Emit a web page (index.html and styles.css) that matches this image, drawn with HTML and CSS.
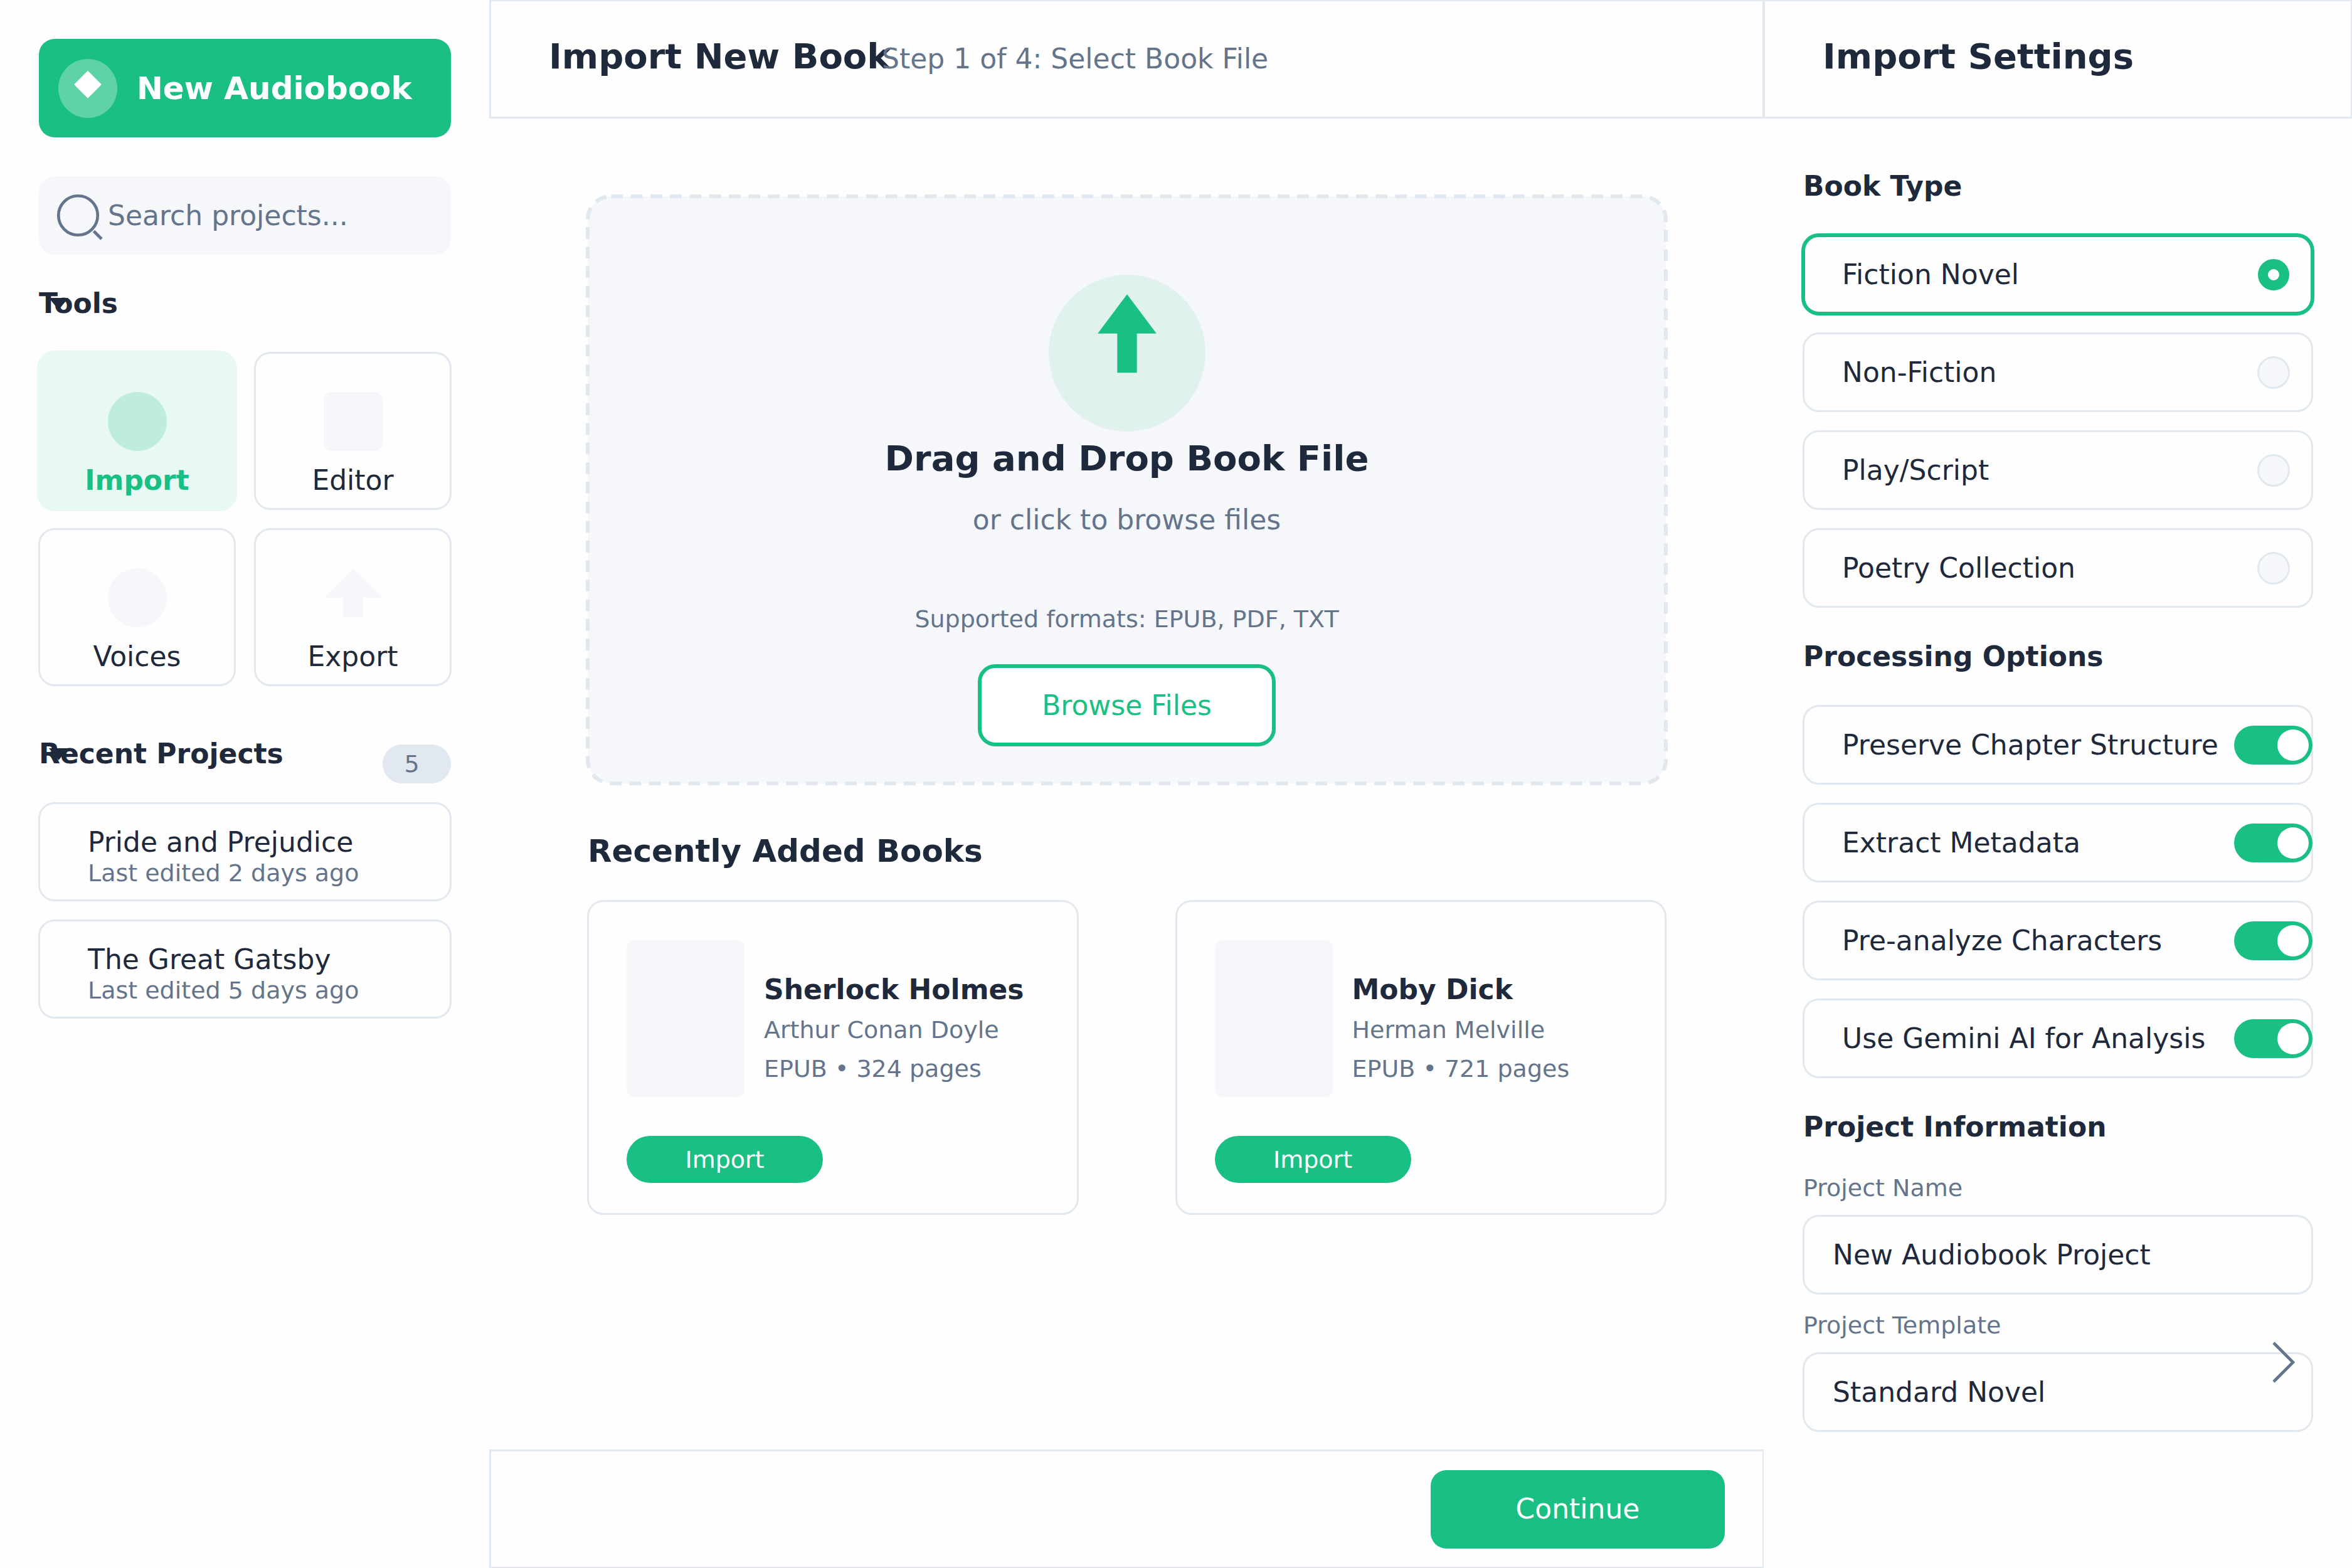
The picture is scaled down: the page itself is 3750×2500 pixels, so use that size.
FILE: index.html
```html
<!DOCTYPE html>
<html lang="en">
<head>
<meta charset="utf-8">
<meta name="viewport" content="width=device-width, initial-scale=1">
<title>Import New Book</title>
<link rel="stylesheet" href="styles.css">
</head>
<body>
<div class="app">
  <aside class="sidebar">
    <button class="new-button" type="button">
      <svg class="new-icon" viewBox="0 0 30 30" aria-hidden="true">
        <circle cx="15" cy="15" r="15" fill="#fff" fill-opacity="0.3"/>
        <path d="M15 6L22 13L15 20L8 13Z" fill="#fff"/>
      </svg>
      <span>New Audiobook</span>
    </button>

    <div class="search">
      <input class="search-input" type="search" placeholder="Search projects..." aria-label="Search projects">
      <svg class="search-icon" viewBox="0 0 35 40" aria-hidden="true">
        <circle cx="20" cy="20" r="10"/>
        <path d="M28 28L32 32"/>
      </svg>
    </div>

    <div class="section-head tools-head">
      <h2 class="heading collapsible">Tools
        <svg class="caret" viewBox="0 0 31 19" aria-hidden="true"><path d="M0 0H31L15.5 19Z"/></svg>
      </h2>
    </div>
    <nav class="tools" aria-label="Tools">
      <button class="tool outlined active" type="button">
        <svg class="tool-icon" viewBox="0 0 30 30" aria-hidden="true"><circle cx="15" cy="15" r="15"/></svg>
        <span>Import</span>
      </button>
      <button class="tool outlined" type="button">
        <svg class="tool-icon" viewBox="0 0 30 30" aria-hidden="true"><rect width="30" height="30" rx="4"/></svg>
        <span>Editor</span>
      </button>
      <button class="tool outlined" type="button">
        <svg class="tool-icon" viewBox="0 0 30 30" aria-hidden="true"><circle cx="15" cy="15" r="15"/></svg>
        <span>Voices</span>
      </button>
      <button class="tool outlined" type="button">
        <svg class="tool-icon" viewBox="0 0 30 30" aria-hidden="true"><path d="M15 0L30 15H20V25H10V15H0Z"/></svg>
        <span>Export</span>
      </button>
    </nav>

    <div class="section-head recent-head">
      <h2 class="heading collapsible">Recent Projects
        <svg class="caret" viewBox="0 0 31 19" aria-hidden="true"><path d="M0 0H31L15.5 19Z"/></svg>
      </h2>
      <span class="badge">5</span>
    </div>
    <nav class="projects" aria-label="Recent projects">
      <a class="project outlined" href="#pride-and-prejudice">
        <span class="project-title">Pride and Prejudice</span>
        <span class="project-meta">Last edited 2 days ago</span>
      </a>
      <a class="project outlined" href="#the-great-gatsby">
        <span class="project-title">The Great Gatsby</span>
        <span class="project-meta">Last edited 5 days ago</span>
      </a>
    </nav>
  </aside>

  <main class="main">
    <header class="bar outlined">
      <h1 class="bar-title">Import New Book</h1>
      <p class="bar-step">Step 1 of 4: Select Book File</p>
    </header>

    <div class="content">
      <section class="dropzone">
        <svg class="dropzone-border" aria-hidden="true"><rect width="100%" height="100%" rx="37.5"/></svg>
        <svg class="upload-icon" viewBox="0 0 80 80" aria-hidden="true">
          <circle cx="40" cy="40" r="40" fill="#dff2ed"/>
          <path d="M40 10L55 30H45V50H35V30H25Z"/>
        </svg>
        <h2 class="drop-title">Drag and Drop Book File</h2>
        <p class="drop-hint">or click to browse files</p>
        <p class="drop-formats">Supported formats: EPUB, PDF, TXT</p>
        <button class="browse" type="button">Browse Files</button>
      </section>

      <h2 class="books-heading">Recently Added Books</h2>
      <div class="books">
        <article class="book outlined">
          <div class="book-info">
            <div class="cover"></div>
            <div class="book-text">
              <h3 class="book-title">Sherlock Holmes</h3>
              <p class="book-meta">Arthur Conan Doyle</p>
              <p class="book-meta">EPUB • 324 pages</p>
            </div>
          </div>
          <button class="pill" type="button">Import</button>
        </article>
        <article class="book outlined">
          <div class="book-info">
            <div class="cover"></div>
            <div class="book-text">
              <h3 class="book-title">Moby Dick</h3>
              <p class="book-meta">Herman Melville</p>
              <p class="book-meta">EPUB • 721 pages</p>
            </div>
          </div>
          <button class="pill" type="button">Import</button>
        </article>
      </div>
    </div>

    <footer class="footer outlined">
      <button class="continue" type="button">Continue</button>
    </footer>
  </main>

  <aside class="settings">
    <header class="bar outlined">
      <h2 class="bar-title">Import Settings</h2>
    </header>
    <form class="settings-body">
      <h3 class="heading group-heading">Book Type</h3>
      <div class="options">
        <label class="option outlined selected">Fiction Novel<input class="radio" type="radio" name="type" checked></label>
        <label class="option outlined">Non-Fiction<input class="radio" type="radio" name="type"></label>
        <label class="option outlined">Play/Script<input class="radio" type="radio" name="type"></label>
        <label class="option outlined">Poetry Collection<input class="radio" type="radio" name="type"></label>
      </div>

      <h3 class="heading group-heading">Processing Options</h3>
      <div class="options">
        <label class="option switch outlined">Preserve Chapter Structure<input class="toggle" type="checkbox" checked></label>
        <label class="option switch outlined">Extract Metadata<input class="toggle" type="checkbox" checked></label>
        <label class="option switch outlined">Pre-analyze Characters<input class="toggle" type="checkbox" checked></label>
        <label class="option switch outlined">Use Gemini AI for Analysis<input class="toggle" type="checkbox" checked></label>
      </div>

      <h3 class="heading group-heading">Project Information</h3>
      <div class="fields">
        <div>
          <label class="field-label" for="project-name">Project Name</label>
          <input class="field outlined" id="project-name" type="text" value="New Audiobook Project">
        </div>
        <div>
          <label class="field-label" for="project-template">Project Template</label>
          <div class="select-wrap">
            <select class="field outlined" id="project-template">
              <option>Standard Novel</option>
            </select>
            <svg class="chevron" viewBox="0 0 36 68" aria-hidden="true"><path d="M2 3L33 34L2 65"/></svg>
          </div>
        </div>
      </div>
    </form>
  </aside>
</div>
</body>
</html>
```
FILE: styles.css
```css
:root {
  --green: #1abf83;
  --ink: #1e293b;
  --muted: #64748b;
  --line: #e2e8f0;
  --soft: #f5f7fb;
  --page: #fefefe;
  --text-s: 38px;
  --text-m: 44px;
  --text-l: 50px;
  --text-xl: 56px;
}

*,
*::before {
  box-sizing: border-box;
}

body {
  margin: 0;
  background: var(--page);
  color: var(--ink);
  font-family: "DejaVu Sans", sans-serif;
  font-size: var(--text-m);
  line-height: 62px;
}

h1,
h2,
h3,
p {
  margin: 0;
}

button,
input,
select {
  margin: 0;
  padding: 0;
  border: 0;
  background: none;
  color: inherit;
  font: inherit;
}

button {
  cursor: pointer;
}

svg {
  display: block;
}

.app {
  display: grid;
  grid-template-columns: 781px minmax(0, 1fr) 938px;
  min-height: 100vh;
}

/* Hairline centred on the edge of the box */
.outlined {
  outline: 3px solid var(--line);
  outline-offset: -2px;
}

.heading {
  font-size: var(--text-m);
  font-weight: 700;
}

/* Sidebar */
.sidebar {
  padding: 62px;
}

.new-button {
  display: flex;
  align-items: center;
  gap: 31px;
  width: 100%;
  height: 157px;
  padding-left: 31px;
  border-radius: 25px;
  background: var(--green);
  color: #fff;
  font-size: var(--text-l);
  font-weight: 700;
}

.new-icon {
  width: 94px;
  height: 94px;
}

.search {
  position: relative;
  margin-top: 62px;
}

.search-input {
  display: block;
  width: 100%;
  height: 125px;
  padding-left: 110px;
  border-radius: 25px;
  background: var(--soft);
  appearance: none;
}

.search-input::placeholder {
  color: var(--muted);
  opacity: 1;
}

.search-icon {
  position: absolute;
  top: 0;
  left: 0;
  height: 125px;
  fill: none;
  stroke: var(--muted);
  stroke-width: 1.5;
}

.section-head {
  display: flex;
  justify-content: space-between;
}

.tools-head {
  margin: 47px 0;
}

.recent-head {
  min-height: 78px;
  margin: 78px 0 31px;
}

.collapsible {
  position: relative;
}

.caret {
  position: absolute;
  top: 22px;
  left: 16px;
  width: 31px;
  height: 19px;
  fill: var(--ink);
}

.tools {
  display: grid;
  grid-template-columns: 1fr 1fr;
  gap: 31px;
}

.tool {
  display: flex;
  flex-direction: column;
  align-items: center;
  gap: 16px;
  height: 250px;
  padding-top: 63px;
  border-radius: 25px;
}

.tool-icon {
  width: 94px;
  height: 94px;
  fill: var(--soft);
}

.tool.active {
  background: #e8f9f3;
  outline: 6px solid #e8f9f3;
  outline-offset: -3px;
  color: var(--green);
  font-weight: 700;
}

.active .tool-icon {
  fill: #bfeddc;
}

.badge {
  align-self: flex-end;
  width: 109px;
  padding-right: 16px;
  border-radius: 31px;
  background: var(--line);
  color: var(--muted);
  font-size: var(--text-s);
  text-align: center;
}

.projects {
  display: grid;
  gap: 31px;
}

.project {
  padding: 38px 78px 20px;
  border-radius: 25px;
  color: inherit;
  text-decoration: none;
}

.project-title,
.project-meta {
  display: block;
  white-space: nowrap;
}

.project-title {
  line-height: 50px;
}

.project-meta {
  color: var(--muted);
  font-size: var(--text-s);
  line-height: 48px;
}

/* Top bars */
.bar {
  display: flex;
  align-items: baseline;
  height: 188px;
  padding: 59px 94px 0;
}

.bar-title {
  flex: 0 0 531px;
  min-width: 0;
  font-size: var(--text-xl);
  white-space: nowrap;
}

.bar-step {
  color: var(--muted);
}

/* Main column */
.main {
  display: flex;
  flex-direction: column;
}

.content {
  padding: 125px 156px;
}

.dropzone {
  position: relative;
  display: flex;
  flex-direction: column;
  align-items: center;
  padding: 125px 0 62px;
  border-radius: 38px;
  background: var(--soft);
  text-align: center;
}

.dropzone-border {
  position: absolute;
  inset: 0;
  width: 100%;
  height: 100%;
  overflow: visible;
  fill: none;
  stroke: var(--line);
  stroke-width: 6.25;
  stroke-dasharray: 18.75 12.5;
}

.upload-icon {
  width: 250px;
  height: 250px;
  fill: var(--green);
}

.drop-title {
  margin-top: 12px;
  font-size: var(--text-xl);
}

.drop-hint {
  margin-top: 36px;
  color: var(--muted);
}

.drop-formats {
  margin-top: 96px;
  color: var(--muted);
  font-size: var(--text-s);
}

.browse {
  position: relative;
  width: 469px;
  height: 125px;
  margin-top: 44px;
  border-radius: 25px;
  outline: 6px solid var(--green);
  outline-offset: -3px;
  background: #fff;
  color: var(--green);
}

.books-heading {
  margin: 77px 0 48px;
  font-size: var(--text-l);
}

.books {
  display: grid;
  grid-template-columns: 1fr 1fr;
  gap: 156px;
}

.book {
  padding: 63px 62px;
  border-radius: 25px;
  height: 500px;
}

.book-info {
  display: flex;
  gap: 31px;
}

.cover {
  width: 188px;
  height: 250px;
  border-radius: 12px;
  background: var(--soft);
}

.book-text {
  padding-top: 46px;
}

.book-title {
  font-size: var(--text-m);
  line-height: 66px;
}

.book-meta {
  color: var(--muted);
  font-size: var(--text-s);
}

.pill {
  width: 313px;
  height: 75px;
  margin-top: 62px;
  border-radius: 38px;
  background: var(--green);
  color: #fff;
  font-size: var(--text-s);
}

.footer {
  display: flex;
  align-items: center;
  justify-content: flex-end;
  height: 188px;
  margin-top: auto;
  padding: 0 62px;
}

.continue {
  width: 469px;
  height: 125px;
  border-radius: 25px;
  background: var(--green);
  color: #fff;
}

/* Settings column */
.settings {
  background: var(--page);
}

.settings-body {
  padding: 30px 63px;
}

.group-heading {
  margin: 48px 0 47px;
}

.settings-body > :first-child {
  margin-top: 0;
  padding-top: 48px;
}

.options,
.fields {
  display: grid;
  gap: 31px;
}

.option {
  display: flex;
  align-items: center;
  justify-content: space-between;
  height: 125px;
  padding: 0 37px 0 62px;
  border-radius: 25px;
  white-space: nowrap;
}

.option.selected {
  outline: 6px solid var(--green);
  outline-offset: -3px;
}

.option.switch {
  padding-right: 0;
}

.radio {
  width: 50px;
  height: 50px;
  border-radius: 50%;
  outline: 3px solid var(--line);
  outline-offset: -2px;
  background: var(--soft);
  appearance: none;
}

.radio:checked {
  border: 16px solid var(--green);
  outline: 0;
  background: #fff;
}

.toggle {
  position: relative;
  display: flex;
  width: 125px;
  height: 62px;
  padding: 6px;
  border-radius: 31px;
  background: var(--line);
  appearance: none;
}

.toggle::before {
  content: "";
  width: 50px;
  height: 50px;
  border-radius: 50%;
  background: #fff;
}

.toggle:checked {
  justify-content: flex-end;
  background: var(--green);
}

.field-label {
  display: block;
  margin-bottom: 25px;
  color: var(--muted);
  font-size: var(--text-s);
  line-height: 38px;
}

.field {
  display: block;
  width: 100%;
  height: 125px;
  padding: 0 47px;
  border-radius: 25px;
  appearance: none;
}

.select-wrap {
  position: relative;
}

.chevron {
  position: absolute;
  top: -19px;
  right: 28px;
  width: 36px;
  height: 68px;
  fill: none;
  stroke: var(--muted);
  stroke-width: 4.7;
  pointer-events: none;
}
```
